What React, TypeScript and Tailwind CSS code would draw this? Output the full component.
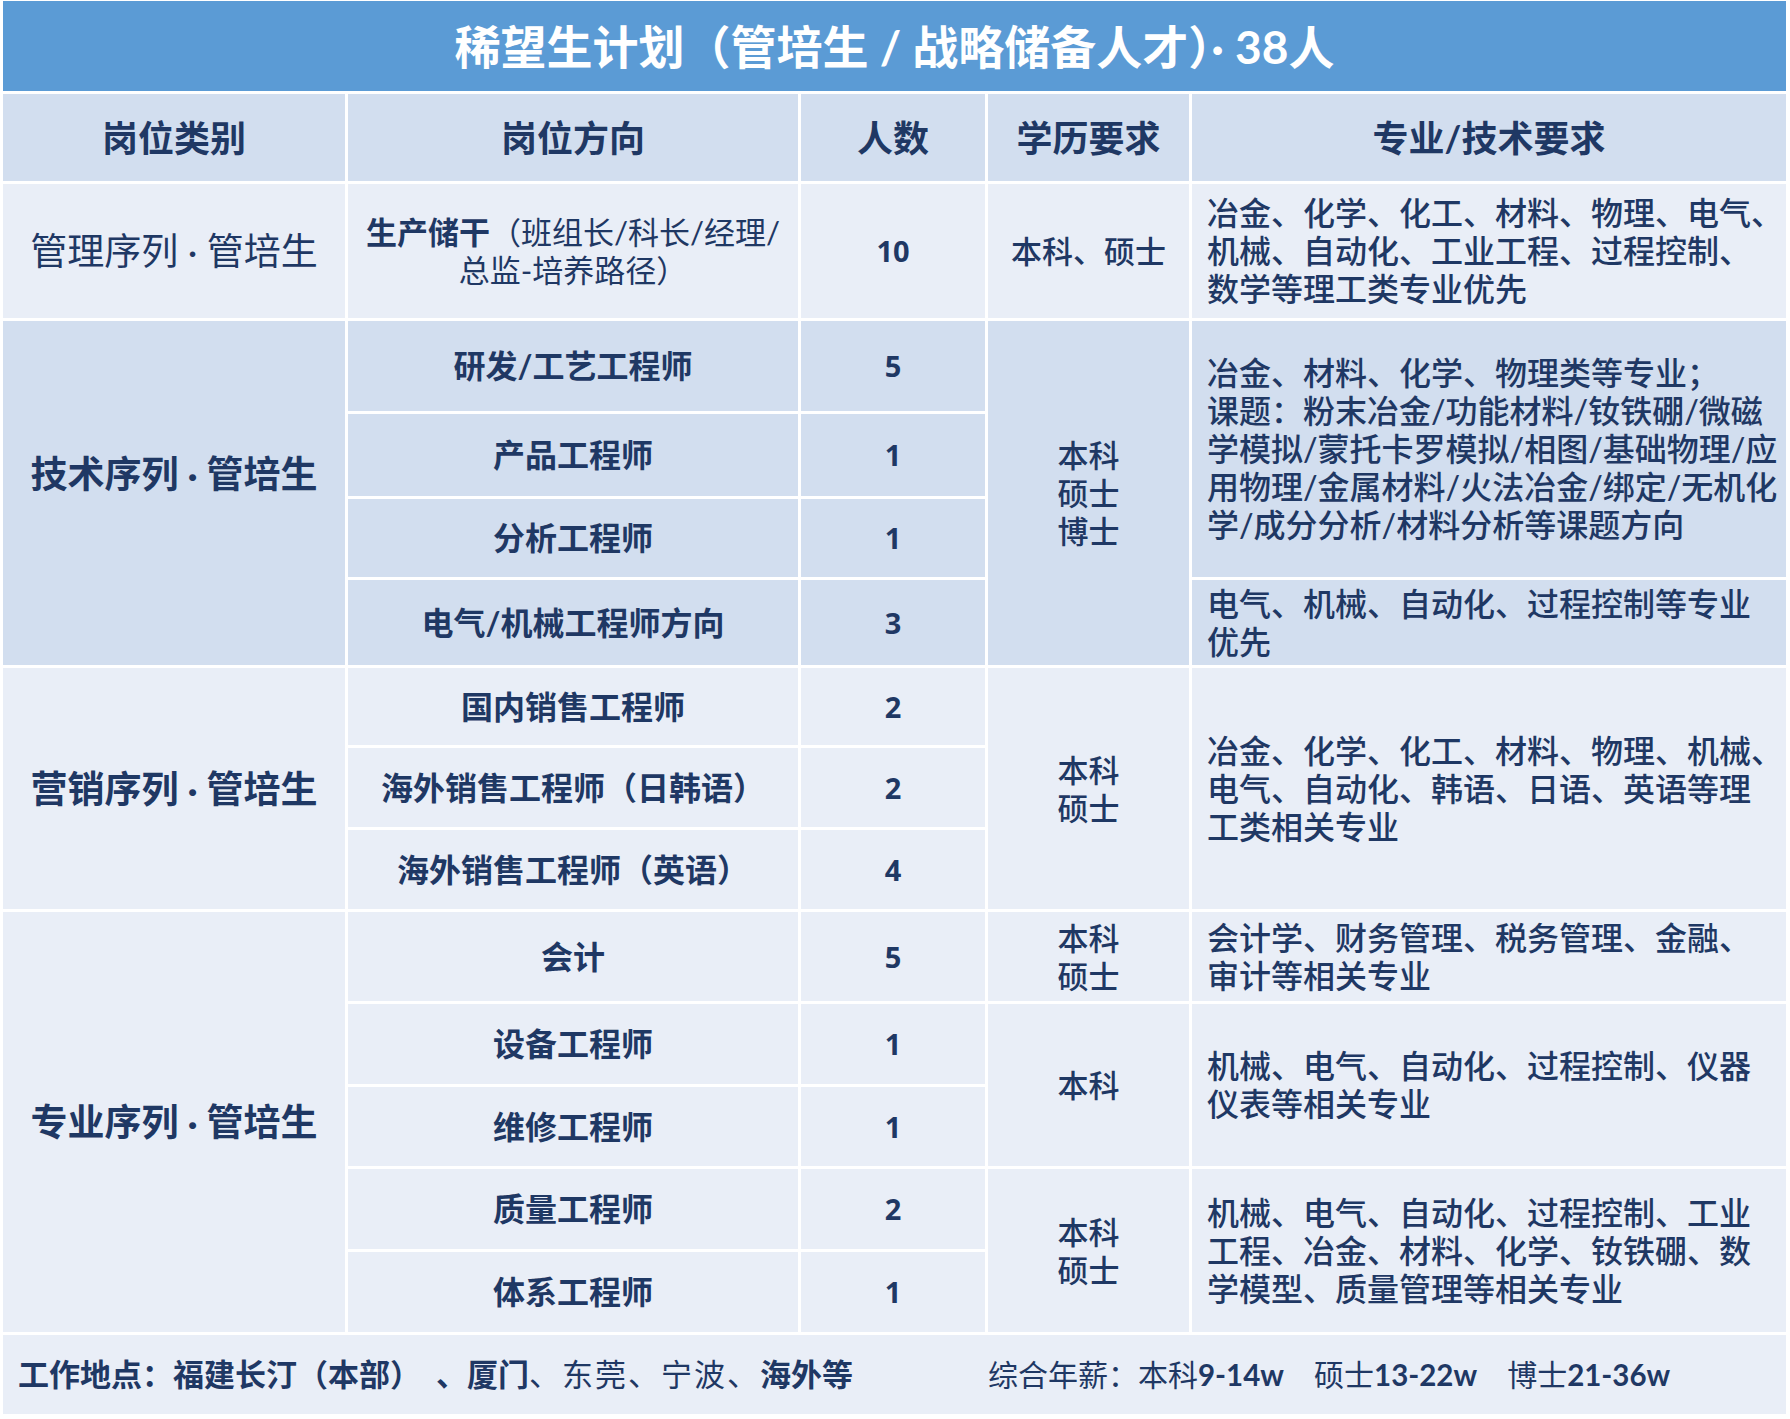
import React from 'react';

const font = { fontFamily: 'Lato, "Noto Sans CJK SC", sans-serif' };
const numFont = { fontFamily: '"Noto Sans", Lato, sans-serif' };

const LIGHT = 'bg-[#e9eef7]';
const MID = 'bg-[#d2deef]';

type Cell = {
  row: string;
  col: string;
  bg: string;
  className?: string;
  children: React.ReactNode;
};

const C: React.FC<Cell> = ({ row, col, bg, className = '', children }) => (
  <div className={`${row} ${col} ${bg} flex items-center justify-center text-center ${className}`}>
    {children}
  </div>
);

// 人数列
const N: React.FC<{ row: string; bg: string; n: string }> = ({ row, bg, n }) => (
  <C row={row} col="col-start-3" bg={bg} className="text-[29px] font-bold">
    <span style={numFont}>{n}</span>
  </C>
);

// 专业要求，按原图手动断行
const Lines: React.FC<{ lines: string[] }> = ({ lines }) => (
  <div className="w-full pl-[15px] text-left text-[32px] leading-[38px] font-medium whitespace-nowrap">
    {lines.map((l, i) => (
      <div key={i}>{l}</div>
    ))}
  </div>
);

export default function App() {
  return (
    <div className="w-[1790px] h-[1419px] bg-white text-[#1f3864]" style={font}>
      <div
        className="grid pl-[3px] pt-[1px] gap-[3px] grid-cols-[342px_450px_184px_201px_594px] grid-rows-[90px_87px_134px_90px_82px_78px_85px_77px_79px_79px_89px_80px_79px_80px_80px_79px]"
      >
        {/* 标题 */}
        <div className="row-start-1 col-start-1 col-span-5 bg-[#5b9bd5] flex items-center justify-center text-white text-[46px] font-bold">
          稀望生计划（管培生 / 战略储备人才）· 38人
        </div>

        {/* 表头 */}
        {['岗位类别', '岗位方向', '人数', '学历要求', '专业/技术要求'].map((h, i) => (
          <div
            key={h}
            className={`row-start-2 ${['col-start-1', 'col-start-2', 'col-start-3', 'col-start-4', 'col-start-5'][i]} ${MID} flex items-center justify-center text-[36px] font-bold`}
          >
            {h}
          </div>
        ))}

        {/* 管理序列 */}
        <C row="row-start-3" col="col-start-1" bg={LIGHT} className="text-[37px] font-normal">
          管理序列 · 管培生
        </C>
        <C row="row-start-3" col="col-start-2" bg={LIGHT} className="text-[31px] leading-[38px] font-normal">
          <div>
            <span className="font-bold">生产储干</span>（班组长/科长/经理/
            <br />
            总监-培养路径）
          </div>
        </C>
        <N row="row-start-3" bg={LIGHT} n="10" />
        <C row="row-start-3" col="col-start-4" bg={LIGHT} className="text-[31px] font-medium">本科、硕士</C>
        <C row="row-start-3" col="col-start-5" bg={LIGHT}>
          <Lines lines={['冶金、化学、化工、材料、物理、电气、', '机械、自动化、工业工程、过程控制、', '数学等理工类专业优先']} />
        </C>

        {/* 技术序列 */}
        <C row="row-start-4 row-span-4" col="col-start-1" bg={MID} className="text-[37px] font-bold pb-[38px]">
          技术序列 · 管培生
        </C>
        <C row="row-start-4" col="col-start-2" bg={MID} className="text-[32px] font-bold">研发/工艺工程师</C>
        <N row="row-start-4" bg={MID} n="5" />
        <C row="row-start-5" col="col-start-2" bg={MID} className="text-[32px] font-bold">产品工程师</C>
        <N row="row-start-5" bg={MID} n="1" />
        <C row="row-start-6" col="col-start-2" bg={MID} className="text-[32px] font-bold">分析工程师</C>
        <N row="row-start-6" bg={MID} n="1" />
        <C row="row-start-7" col="col-start-2" bg={MID} className="text-[32px] font-bold">电气/机械工程师方向</C>
        <N row="row-start-7" bg={MID} n="3" />
        <C row="row-start-4 row-span-4" col="col-start-4" bg={MID} className="text-[31px] leading-[38px] font-medium">
          <div>本科<br />硕士<br />博士</div>
        </C>
        <C row="row-start-4 row-span-3" col="col-start-5" bg={MID}>
          <Lines
            lines={[
              '冶金、材料、化学、物理类等专业；',
              '课题：粉末冶金/功能材料/钕铁硼/微磁',
              '学模拟/蒙托卡罗模拟/相图/基础物理/应',
              '用物理/金属材料/火法冶金/绑定/无机化',
              '学/成分分析/材料分析等课题方向',
            ]}
          />
        </C>
        <C row="row-start-7" col="col-start-5" bg={MID}>
          <Lines lines={['电气、机械、自动化、过程控制等专业', '优先']} />
        </C>

        {/* 营销序列 */}
        <C row="row-start-8 row-span-3" col="col-start-1" bg={LIGHT} className="text-[37px] font-bold">
          营销序列 · 管培生
        </C>
        <C row="row-start-8" col="col-start-2" bg={LIGHT} className="text-[32px] font-bold">国内销售工程师</C>
        <N row="row-start-8" bg={LIGHT} n="2" />
        <C row="row-start-9" col="col-start-2" bg={LIGHT} className="text-[32px] font-bold">海外销售工程师（日韩语）</C>
        <N row="row-start-9" bg={LIGHT} n="2" />
        <C row="row-start-10" col="col-start-2" bg={LIGHT} className="text-[32px] font-bold">海外销售工程师（英语）</C>
        <N row="row-start-10" bg={LIGHT} n="4" />
        <C row="row-start-8 row-span-3" col="col-start-4" bg={LIGHT} className="text-[31px] leading-[38px] font-medium">
          <div>本科<br />硕士</div>
        </C>
        <C row="row-start-8 row-span-3" col="col-start-5" bg={LIGHT}>
          <Lines lines={['冶金、化学、化工、材料、物理、机械、', '电气、自动化、韩语、日语、英语等理', '工类相关专业']} />
        </C>

        {/* 专业序列 */}
        <C row="row-start-11 row-span-5" col="col-start-1" bg={LIGHT} className="text-[37px] font-bold">
          专业序列 · 管培生
        </C>
        <C row="row-start-11" col="col-start-2" bg={LIGHT} className="text-[32px] font-bold">会计</C>
        <N row="row-start-11" bg={LIGHT} n="5" />
        <C row="row-start-12" col="col-start-2" bg={LIGHT} className="text-[32px] font-bold">设备工程师</C>
        <N row="row-start-12" bg={LIGHT} n="1" />
        <C row="row-start-13" col="col-start-2" bg={LIGHT} className="text-[32px] font-bold">维修工程师</C>
        <N row="row-start-13" bg={LIGHT} n="1" />
        <C row="row-start-14" col="col-start-2" bg={LIGHT} className="text-[32px] font-bold">质量工程师</C>
        <N row="row-start-14" bg={LIGHT} n="2" />
        <C row="row-start-15" col="col-start-2" bg={LIGHT} className="text-[32px] font-bold">体系工程师</C>
        <N row="row-start-15" bg={LIGHT} n="1" />

        <C row="row-start-11" col="col-start-4" bg={LIGHT} className="text-[31px] leading-[38px] font-medium">
          <div>本科<br />硕士</div>
        </C>
        <C row="row-start-11" col="col-start-5" bg={LIGHT}>
          <Lines lines={['会计学、财务管理、税务管理、金融、', '审计等相关专业']} />
        </C>
        <C row="row-start-12 row-span-2" col="col-start-4" bg={LIGHT} className="text-[31px] font-medium">本科</C>
        <C row="row-start-12 row-span-2" col="col-start-5" bg={LIGHT}>
          <Lines lines={['机械、电气、自动化、过程控制、仪器', '仪表等相关专业']} />
        </C>
        <C row="row-start-14 row-span-2" col="col-start-4" bg={LIGHT} className="text-[31px] leading-[38px] font-medium">
          <div>本科<br />硕士</div>
        </C>
        <C row="row-start-14 row-span-2" col="col-start-5" bg={LIGHT}>
          <Lines lines={['机械、电气、自动化、过程控制、工业', '工程、冶金、材料、化学、钕铁硼、数', '学模型、质量管理等相关专业']} />
        </C>

        {/* 底部 */}
        <div className={`row-start-16 col-start-1 col-span-5 ${LIGHT} flex items-center text-[31px] whitespace-nowrap`}>
          <div className="w-[985px] pl-[15px]">
            <span className="font-bold">工作地点：福建长汀（本部）&nbsp;&nbsp;、厦门</span>
            <span className="font-normal tracking-[2px]">、东莞、宁波、</span>
            <span className="font-bold">海外等</span>
          </div>
          <div className="text-[30px]">
            <span className="font-normal">综合年薪：本科</span>
            <span className="font-bold text-[29.5px]">9-14w</span>
            <span className="font-normal ml-[30px]">硕士</span>
            <span className="font-bold text-[29.5px]">13-22w</span>
            <span className="font-normal ml-[30px]">博士</span>
            <span className="font-bold text-[29.5px]">21-36w</span>
          </div>
        </div>
      </div>
    </div>
  );
}
